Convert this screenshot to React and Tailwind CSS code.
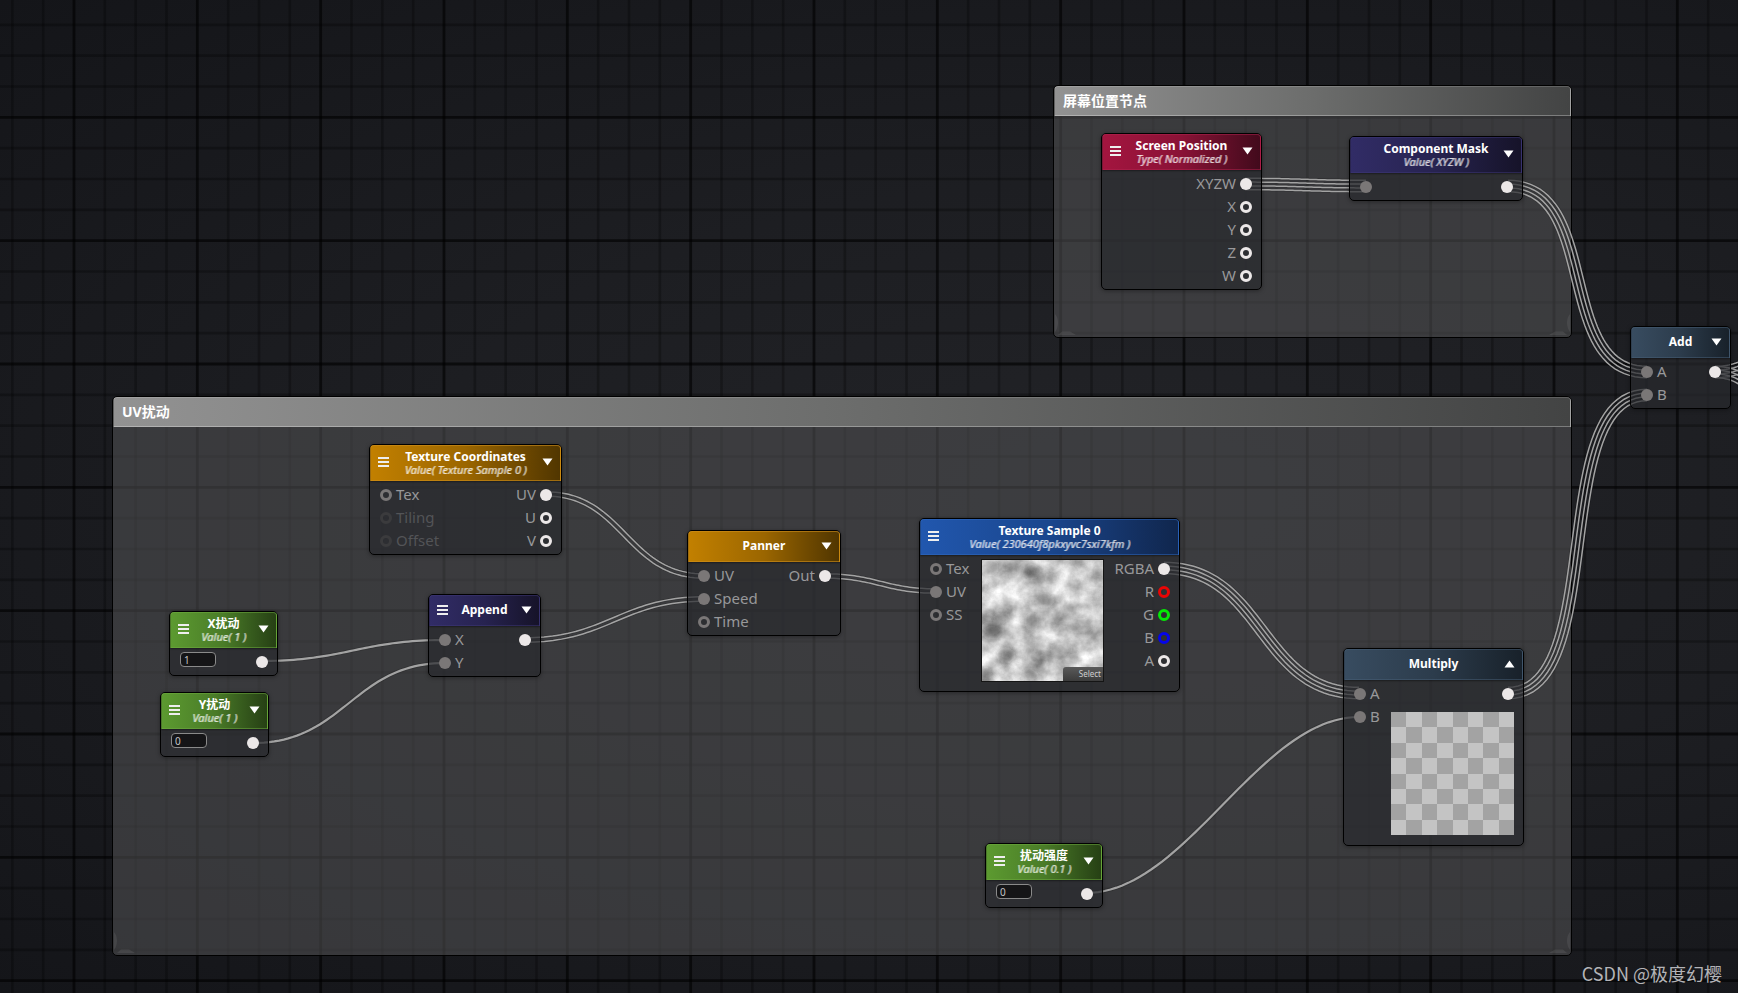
import React from "react";

const GRID = 370 / 3;
const SANS = "font-['Noto_Sans','Noto_Sans_CJK_SC',sans-serif]";

function Grid() {
  const lines = [];
  for (let i = -4; i < 160; i++) {
    if (i % 4 === 0) continue;
    lines.push(74 + (i * GRID) / 4);
  }
  const rows = [];
  for (let i = 0; i < 100; i++) {
    if (i % 4 === 0) continue;
    rows.push(-6 + (i * GRID) / 4);
  }
  const majors = Array.from({ length: 40 }, (_, i) => 74 + i * GRID);
  const majorRows = Array.from({ length: 25 }, (_, i) => -6 + i * GRID);
  return (
    <svg className="absolute inset-0 h-full w-full" aria-hidden="true">
      <g stroke="#000000" strokeOpacity="0.26" strokeWidth="2.6">
        {lines.map((x) => <line key={"v" + x} x1={x} x2={x} y1="0" y2="100%" />)}
        {rows.map((y) => <line key={"h" + y} x1="0" x2="100%" y1={y} y2={y} />)}
      </g>
      <g stroke="#000000" strokeOpacity="0.6" strokeWidth="2.8">
        {majors.map((x) => <line key={"V" + x} x1={x} x2={x} y1="0" y2="100%" />)}
        {majorRows.map((y) => <line key={"H" + y} x1="0" x2="100%" y1={y} y2={y} />)}
      </g>
    </svg>
  );
}

// One strand of a wire: a cubic curve shifted along its normal by `shift`.
function strand([x0, y0, x1, y1], shift) {
  const d = Math.min(100, Math.hypot(x1 - x0, y1 - y0) * 0.33 + Math.abs(x1 - x0) * 0.12);
  const cx0 = x0 + d;
  const cx1 = x1 - d;
  const pts = [];
  for (let i = 0; i <= 48; i++) {
    const t = i / 48;
    const u = 1 - t;
    const x = u * u * u * x0 + 3 * u * u * t * cx0 + 3 * u * t * t * cx1 + t * t * t * x1;
    const y = u * u * u * y0 + 3 * u * u * t * y0 + 3 * u * t * t * y1 + t * t * t * y1;
    const dx = 3 * u * u * (cx0 - x0) + 6 * u * t * (cx1 - cx0) + 3 * t * t * (x1 - cx1);
    const dy = 6 * u * t * (y1 - y0);
    const len = Math.hypot(dx, dy) || 1;
    pts.push(`${(x - (dy / len) * shift).toFixed(2)},${(y + (dx / len) * shift).toFixed(2)}`);
  }
  return pts.join(" ");
}

const SHIFTS = { 1: [0], 2: [-2.2, 2.2], 4: [-5.7, -1.9, 1.9, 5.7] };

const WIRES = [
  { at: [1245, 184, 1366, 186], n: 4 },
  { at: [1508, 186, 1647, 372], n: 4 },
  { at: [1508, 693, 1647, 395], n: 4 },
  { at: [1715, 372, 1800, 345], n: 4 },
  { at: [1715, 372, 1820, 440], n: 4 },
  { at: [546, 494, 704, 576], n: 2 },
  { at: [525, 640, 704, 599], n: 2 },
  { at: [825, 576, 936, 591], n: 2 },
  { at: [1164, 568, 1359, 693], n: 4 },
  { at: [1086, 893, 1359, 717], n: 1 },
  { at: [261, 661, 445, 640], n: 1 },
  { at: [253, 743, 445, 663], n: 1 },
];

function Wires() {
  return (
    <svg className="absolute inset-0 h-full w-full" aria-hidden="true" fill="none">
      {WIRES.map(({ at, n }) =>
        SHIFTS[n].map((s) => (
          <g key={at.join() + s}>
            <polyline points={strand(at, s)} stroke="#000000" strokeOpacity="0.15" strokeWidth={n === 1 ? 4 : 3} />
            <polyline points={strand(at, s)} stroke="#a3a3a3" strokeWidth={n === 1 ? 2.2 : 1.5} />
          </g>
        ))
      )}
    </svg>
  );
}

function Corner({ flip }) {
  return (
    <svg viewBox="0 0 22 24" className={flip ? "h-6 w-[22px] -scale-x-100" : "h-6 w-[22px]"} aria-hidden="true">
      <path d="M1 1C5 5 5 14 1 19Z" fill="#ffffff" fillOpacity="0.07" />
      <path d="M4 22L8 18.500H16L22 22Z" fill="#ffffff" fillOpacity="0.08" />
    </svg>
  );
}

function Group({ place, title }) {
  return (
    <section className={`absolute flex flex-col overflow-hidden rounded-[5px] border border-black bg-[#535456]/55 ${place}`}>
      <h2 className="h-[30px] rounded-t-[4px] border border-white/15 border-b-white/30 bg-linear-to-r from-[#929292] via-[#6c6d6c] to-[#434444] px-2 text-[14px] leading-7 font-bold text-white">
        {title}
      </h2>
      <div className="mt-auto flex justify-between">
        <Corner />
        <Corner flip />
      </div>
    </section>
  );
}

const TONES = {
  red: "from-[#a3153f] via-[#8a1236] to-[#420a1c] border-[#b3234f]/50",
  indigo: "from-[#312c66] via-[#272350] to-[#161329] border-[#3d3878]/50",
  slate: "from-[#384c60] via-[#2c3c4c] to-[#18212a] border-[#476078]/50",
  amber: "from-[#c28000] via-[#9b6600] to-[#513600] border-[#d0901a]/60",
  blue: "from-[#2157ae] via-[#1a468d] to-[#10264d] border-[#3069c0]/50",
  green: "from-[#5c9a30] via-[#4a7c28] to-[#264014] border-[#6fae40]/50",
};

const PIN = {
  in: "bg-[#7a7777]",
  inOpen: "border-[3px] border-[#7a7777]",
  off: "border-[3px] border-[#3b3b3d]",
  out: "bg-[#ece8e8]",
  outOpen: "border-[3px] border-[#ece8e8]",
  red: "border-[3px] border-[#ea0505]",
  green: "border-[3px] border-[#05ea05]",
  blue: "border-[3px] border-[#0505ea]",
};

function Port({ pin, label, right }) {
  return (
    <div className={`flex h-[23px] items-center gap-1 text-[15px] leading-[23px] ${right ? "flex-row-reverse" : ""} ${pin === "off" ? "text-[#535457]" : "text-[#98989a]"}`}>
      <span className={`size-3 shrink-0 rounded-full ${PIN[pin]}`} />
      {label && <span>{label}</span>}
    </div>
  );
}

function Menu() {
  return (
    <svg viewBox="0 0 11 10" className="h-[10px] w-[11px]" fill="#eeeeee" aria-hidden="true">
      <rect y="0" width="11" height="2" />
      <rect y="4" width="11" height="2" />
      <rect y="8" width="11" height="2" />
    </svg>
  );
}

function Node({ place, tone, title, sub, menu, arrow = "down", children }) {
  return (
    <article className={`absolute flex flex-col rounded-[5px] border border-black bg-[#28292d]/70 shadow-[0_1px_4px_rgba(0,0,0,0.35)] ${place}`}>
      <header
        className={`grid grid-cols-[11px_1fr_11px] items-center rounded-t-[4px] border bg-linear-to-r px-[7px] pb-0.5 shadow-[0_1px_2px_rgba(0,0,0,0.4)] ${sub ? "h-9" : "h-[31px]"} ${TONES[tone]}`}
      >
        {menu ? (
          <button type="button" aria-label={`${title} menu`} className="flex items-center">
            <Menu />
          </button>
        ) : (
          <span />
        )}
        <div className="flex flex-col items-center whitespace-nowrap">
          <h3 className="text-[12px] leading-[14px] font-bold text-white">{title}</h3>
          {sub && (
            <p className="text-[11px] leading-[11px] text-white/60 italic [text-shadow:1px_0_currentColor]">{sub}</p>
          )}
        </div>
        {arrow ? (
          <button type="button" aria-label={`${title} preview`} className="flex items-center">
            <svg viewBox="0 0 11 8" className="h-2 w-[11px]" fill="#ffffff" aria-hidden="true">
              <path d={arrow === "up" ? "M0.500 7.500H10.500L5.500 0.500Z" : "M0.500 0.500H10.500L5.500 7.500Z"} />
            </svg>
          </button>
        ) : (
          <span />
        )}
      </header>
      <div className="flex flex-1 justify-between py-0.5 pr-[9px] pl-2.5">{children}</div>
    </article>
  );
}

function ValueNode({ place, title, sub, value }) {
  return (
    <Node place={place} tone="green" title={title} sub={sub} menu>
      <div className="flex items-start pt-0.5">
        <input
          aria-label={title}
          defaultValue={value}
          className="h-[15px] w-9 rounded-[4px] border border-[#8a8a8a] bg-[#151517] px-[3px] text-[10px] leading-[13px] text-[#c4c4c4] outline-none"
        />
      </div>
      <Port pin="out" right />
    </Node>
  );
}

// Dark patches of the cloud texture: x, y, rx, ry, opacity.
const PATCHES = [
  [50, 12, 8, 6, 0.5], [63, 41, 8, 6, 0.45], [50, 62, 7, 10, 0.35], [10, 71, 11, 7, 0.55],
  [24, 96, 8, 6, 0.5], [47, 116, 8, 5, 0.45], [96, 2, 6, 4, 0.45], [4, 114, 6, 7, 0.3],
  [118, 12, 6, 6, 0.3], [98, 66, 14, 8, 0.22], [8, 8, 9, 9, 0.3], [80, 90, 12, 7, 0.22],
  [20, 58, 9, 5, 0.3], [70, 18, 8, 5, 0.22],
];

function Clouds() {
  return (
    <svg viewBox="0 0 122 122" className="block h-full w-full" role="img" aria-label="Cloud texture">
      <defs>
        <filter id="cloud" x="0" y="0" width="100%" height="100%" colorInterpolationFilters="sRGB">
          <feTurbulence type="fractalNoise" baseFrequency="0.045" numOctaves="5" seed="11" />
          <feColorMatrix values="0.700 0 0 0 0.430  0.700 0 0 0 0.430  0.700 0 0 0 0.430  0 0 0 0 1" />
        </filter>
        <filter id="soften" x="-100%" y="-100%" width="300%" height="300%">
          <feGaussianBlur stdDeviation="4" />
        </filter>
      </defs>
      <rect width="122" height="122" filter="url(#cloud)" />
      <g filter="url(#soften)">
        {PATCHES.map(([x, y, rx, ry, o]) => (
          <ellipse key={`${x}-${y}`} cx={x} cy={y} rx={rx} ry={ry} fill="#202020" opacity={o} />
        ))}
      </g>
    </svg>
  );
}

function Checker() {
  return (
    <div className="grid h-full w-full grid-cols-8 grid-rows-8">
      {Array.from({ length: 64 }, (_, i) => (
        <span key={i} className={((i % 8) + Math.floor(i / 8)) % 2 ? "bg-[#c4c4c4]" : "bg-[#a3a3a3]"} />
      ))}
    </div>
  );
}

export default function App() {
  return (
    <main className={`relative min-h-screen w-full overflow-hidden bg-[#15161a] bg-[radial-gradient(ellipse_at_65%_50%,#222327_0%,#1d1e22_45%,#141519_100%)] ${SANS}`}>
      <Grid />

      <Group place="left-[1053px] top-[85px] h-[253px] w-[519px]" title="屏幕位置节点" />
      <Group place="left-[112px] top-[396px] h-[560px] w-[1460px]" title="UV扰动" />

      <Wires />

      <Node place="left-[1101px] top-[133px] w-[161px]" tone="red" title="Screen Position" sub="Type( Normalized )" menu>
        <div className="ml-auto">
          <Port pin="out" label="XYZW" right />
          <Port pin="outOpen" label="X" right />
          <Port pin="outOpen" label="Y" right />
          <Port pin="outOpen" label="Z" right />
          <Port pin="outOpen" label="W" right />
        </div>
      </Node>

      <Node place="left-[1349px] top-[136px] w-[174px]" tone="indigo" title="Component Mask" sub="Value( XYZW )">
        <Port pin="in" />
        <Port pin="out" right />
      </Node>

      <Node place="left-[1630px] top-[326px] w-[101px]" tone="slate" title="Add">
        <div>
          <Port pin="in" label="A" />
          <Port pin="in" label="B" />
        </div>
        <Port pin="out" right />
      </Node>

      <Node place="left-[369px] top-[444px] w-[193px]" tone="amber" title="Texture Coordinates" sub="Value( Texture Sample 0 )" menu>
        <div>
          <Port pin="inOpen" label="Tex" />
          <Port pin="off" label="Tiling" />
          <Port pin="off" label="Offset" />
        </div>
        <div>
          <Port pin="out" label="UV" right />
          <Port pin="outOpen" label="U" right />
          <Port pin="outOpen" label="V" right />
        </div>
      </Node>

      <Node place="left-[687px] top-[530px] w-[154px]" tone="amber" title="Panner">
        <div>
          <Port pin="in" label="UV" />
          <Port pin="in" label="Speed" />
          <Port pin="inOpen" label="Time" />
        </div>
        <Port pin="out" label="Out" right />
      </Node>

      <Node place="left-[919px] top-[518px] h-[174px] w-[261px]" tone="blue" title="Texture Sample 0" sub="Value( 230640f8pkxyvc7sxi7kfm )" menu arrow={null}>
        <div className="w-[51px]">
          <Port pin="inOpen" label="Tex" />
          <Port pin="in" label="UV" />
          <Port pin="inOpen" label="SS" />
        </div>
        <div className="relative mt-0.5 size-[123px] border border-[#151515]">
          <Clouds />
          <button type="button" className="absolute right-0 bottom-0 h-[14px] w-10 rounded-tl-[3px] bg-linear-to-b from-[#5a5a5a] to-[#3c3c3c] pr-0.5 text-right text-[8px] leading-[14px] text-[#cfcfcf]">
            Select
          </button>
        </div>
        <div className="w-[66px]">
          <Port pin="out" label="RGBA" right />
          <Port pin="red" label="R" right />
          <Port pin="green" label="G" right />
          <Port pin="blue" label="B" right />
          <Port pin="outOpen" label="A" right />
        </div>
      </Node>

      <Node place="left-[428px] top-[594px] w-[113px]" tone="indigo" title="Append" menu>
        <div>
          <Port pin="in" label="X" />
          <Port pin="in" label="Y" />
        </div>
        <Port pin="out" right />
      </Node>

      <ValueNode place="left-[169px] top-[611px] w-[109px]" title="X扰动" sub="Value( 1 )" value="1" />
      <ValueNode place="left-[160px] top-[692px] w-[109px]" title="Y扰动" sub="Value( 1 )" value="0" />
      <ValueNode place="left-[985px] top-[843px] w-[118px]" title="扰动强度" sub="Value( 0.1 )" value="0" />

      <Node place="left-[1343px] top-[648px] h-[198px] w-[181px]" tone="slate" title="Multiply" arrow="up">
        <div>
          <Port pin="in" label="A" />
          <Port pin="in" label="B" />
        </div>
        <div className="flex flex-col items-end">
          <Port pin="out" right />
          <div className="mt-[7px] size-[123px]">
            <Checker />
          </div>
        </div>
      </Node>

      <p className="absolute right-4 bottom-[7px] font-['Noto_Sans_CJK_SC',sans-serif] text-[18px] leading-[26px] text-[#b4b4b8]">
        CSDN @极度幻樱
      </p>
    </main>
  );
}
